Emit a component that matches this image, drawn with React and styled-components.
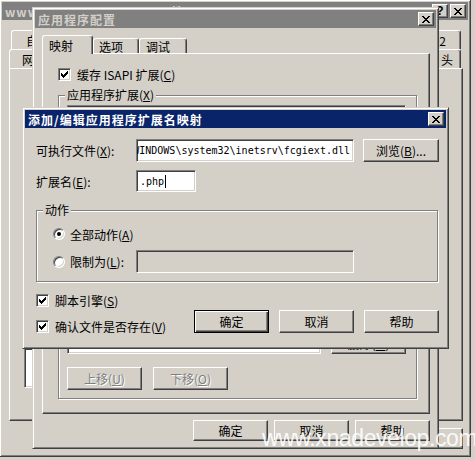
import styled, { createGlobalStyle, css } from "styled-components";

const GlobalStyle = createGlobalStyle`
  html, body { margin: 0; padding: 0; }
  body {
    background: #D4D0C8;
    font-family: "Noto Sans CJK SC", "Liberation Sans", sans-serif;
    font-size: 12px;
    color: #000;
    text-autospace: no-autospace;
  }
  * { box-sizing: border-box; }
`;

const raised = `
  border: 1px solid;
  border-color: #fff #404040 #404040 #fff;
  box-shadow: inset -1px -1px #808080;
`;

const sunken = `
  border: 1px solid;
  border-color: #808080 #fff #fff #808080;
  box-shadow: inset 1px 1px #404040, inset -1px -1px #D4D0C8;
`;

const Desktop = styled.div`
  position: relative;
  width: 475px;
  height: 460px;
  overflow: hidden;
  background: #D4D0C8;
`;

const Window = styled.div`
  position: absolute;
  isolation: isolate;
  left: ${p => p.$x}px;
  top: ${p => p.$y}px;
  width: ${p => p.$w}px;
  height: ${p => p.$h}px;
  display: flex;
  flex-direction: column;
  padding: 2px;
  background: #D4D0C8;
  border: 1px solid;
  border-color: #D4D0C8 #404040 #404040 #D4D0C8;
  box-shadow: inset 1px 1px #fff, inset -1px -1px #808080;
`;

const TitleBar = styled.div`
  flex: none;
  height: 18px;
  display: flex;
  align-items: center;
  padding: 0 2px 0 3px;
  background: ${p => (p.$active ? "#0A246A" : "#808080")};
  color: ${p => (p.$active ? "#fff" : "#D4D0C8")};
`;

const TitleText = styled.span`
  flex: 1;
  font-weight: bold;
  letter-spacing: 1px;
  white-space: nowrap;
  overflow: hidden;
`;

const CaptionButtons = styled.div`
  display: flex;
  gap: 2px;
`;

const CaptionButton = styled.div`
  width: 16px;
  height: 14px;
  display: flex;
  align-items: center;
  justify-content: center;
  background: #D4D0C8;
  ${raised}
  color: #000;
  font: bold 12px "Liberation Sans", sans-serif;
`;

const Body = styled.div`
  flex: 1;
  min-height: 0;
  display: flex;
  flex-direction: column;
  padding: ${p => p.$pad};
`;

const TabRow = styled.div`
  flex: none;
  display: flex;
  justify-content: space-between;
  align-items: flex-end;
  height: ${p => p.$h ?? 19}px;
  padding: 0 2px 0 ${p => p.$left ?? 0}px;
`;

const TabGroup = styled.div`
  display: flex;
  align-items: flex-end;
`;

const Tab = styled.div`
  height: ${p => (p.$active ? 19 : p.$h ?? 15)}px;
  margin-bottom: ${p => (p.$active ? -1 : 0)}px;
  width: ${p => (p.$w ? `${p.$w}px` : "auto")};
  position: relative;
  z-index: ${p => (p.$active ? 2 : 1)};
  display: flex;
  align-items: center;
  padding: 0 ${p => p.$pr ?? 6}px 0 ${p => p.$pl ?? 6}px;
  background: #D4D0C8;
  border-top: 1px solid #fff;
  border-left: 1px solid #fff;
  border-right: 1px solid #404040;
  box-shadow: inset -1px 0 #808080;
  border-radius: 3px 3px 0 0;
  white-space: nowrap;
`;

const TabPanel = styled.div`
  flex: 1;
  min-height: 0;
  display: flex;
  flex-direction: column;
  padding: ${p => p.$pad};
  ${raised}
`;

const Group = styled.div`
  position: relative;
  display: flex;
  flex-direction: column;
  padding: ${p => p.$pad};
  margin-top: ${p => p.$mt ?? 0}px;
  margin-right: ${p => p.$mr ?? 0}px;
  border: 1px solid #808080;
  box-shadow: inset 1px 1px #fff, 1px 1px #fff;
  ${p => p.$grow && "flex: 1; min-height: 0;"}
`;

const GroupLabel = styled.span`
  position: absolute;
  top: -9px;
  left: 6px;
  padding: 0 2px;
  background: #D4D0C8;
  line-height: 16px;
`;

const Row = styled.div`
  display: flex;
  align-items: center;
  gap: ${p => p.$gap ?? 0}px;
  margin-top: ${p => p.$mt ?? 0}px;
  height: ${p => (p.$h ? `${p.$h}px` : "auto")};
`;

const Label = styled.span`
  flex: none;
  width: ${p => (p.$w ? `${p.$w}px` : "auto")};
  white-space: nowrap;
`;

const Edit = styled.div`
  flex: none;
  width: ${p => p.$w}px;
  height: ${p => p.$h ?? 22}px;
  display: flex;
  align-items: center;
  justify-content: ${p => (p.$end ? "flex-end" : "flex-start")};
  padding: 0 3px;
  overflow: hidden;
  white-space: nowrap;
  background: ${p => (p.$disabled ? "#D4D0C8" : "#fff")};
  font-family: "DejaVu Sans Mono", "Liberation Mono", monospace;
  font-size: 10px;
  ${sunken}
`;

const Caret = styled.span`
  width: 1px;
  height: 13px;
  margin-left: 1px;
  background: #000;
`;

const ListView = styled.div`
  flex: ${p => (p.$fixed ? "none" : "1")};
  width: ${p => (p.$w ? `${p.$w}px` : "auto")};
  height: ${p => (p.$h ? `${p.$h}px` : "auto")};
  margin-top: ${p => (p.$push ? "auto" : "0")};
  background: #fff;
  ${sunken}
`;

const Button = styled.button`
  flex: none;
  width: ${p => p.$w ?? 75}px;
  height: ${p => p.$h ?? 22}px;
  padding: 0;
  display: flex;
  align-items: center;
  justify-content: center;
  font: inherit;
  white-space: nowrap;
  background: #D4D0C8;
  color: ${p => (p.$disabled ? "#808080" : "#000")};
  text-shadow: ${p => (p.$disabled ? "1px 1px #fff" : "none")};
  ${raised}
  ${p =>
    p.$default &&
    css`
      border: 1px solid #000;
      box-shadow: inset 1px 1px #fff, inset -1px -1px #404040, inset -2px -2px #808080;
    `}
`;

const ButtonRow = styled.div`
  flex: none;
  display: flex;
  justify-content: flex-end;
  gap: ${p => p.$gap ?? 6}px;
  margin-top: ${p => p.$mt ?? 0}px;
`;

const Check = styled.span`
  flex: none;
  width: 13px;
  height: 13px;
  display: flex;
  align-items: center;
  justify-content: center;
  background: #fff;
  ${sunken}
`;

const Radio = styled.span`
  flex: none;
  width: 12px;
  height: 12px;
  border-radius: 50%;
  display: flex;
  align-items: center;
  justify-content: center;
  background: #fff;
  border: 1px solid;
  border-color: #808080 #fff #fff #808080;
  box-shadow: inset 1px 1px #404040, inset -1px -1px #D4D0C8;
  &::after {
    content: "";
    width: 4px;
    height: 4px;
    border-radius: 50%;
    background: ${p => (p.$checked ? "#000" : "transparent")};
  }
`;

const OptionLine = styled.label`
  flex: none;
  display: flex;
  align-items: center;
  gap: ${p => p.$gap ?? 6}px;
  width: ${p => (p.$w ? `${p.$w}px` : "auto")};
  height: ${p => p.$h ?? 13}px;
  margin-top: ${p => p.$mt ?? 0}px;
  white-space: nowrap;
`;

const BottomArea = styled.div`
  flex: none;
  display: flex;
  justify-content: space-between;
  align-items: flex-end;
  margin-top: 12px;
`;

const Column = styled.div`
  display: flex;
  flex-direction: column;
`;

const Watermark = styled.div`
  position: absolute;
  left: 262px;
  top: 425px;
  font-family: "Liberation Sans", sans-serif;
  font-size: 23px;
  letter-spacing: -0.4px;
  color: rgba(255, 255, 255, 0.9);
  white-space: nowrap;
  pointer-events: none;
`;

const CloseGlyph = () => (
  <svg width="8" height="7" viewBox="0 0 8 7" shapeRendering="crispEdges">
    <path
      fill="#000"
      d="M0 0h2v1H0z M6 0h2v1H6z M1 1h2v1H1z M5 1h2v1H5z M2 2h4v1H2z M3 3h2v1H3z M2 4h4v1H2z M1 5h2v1H1z M5 5h2v1H5z M0 6h2v1H0z M6 6h2v1H6z"
    />
  </svg>
);

const CheckGlyph = () => (
  <svg width="7" height="7" viewBox="0 0 7 7" shapeRendering="crispEdges">
    <path
      fill="#000"
      d="M6 0h1v1H6z M5 1h2v1H5z M0 2h1v1H0z M4 2h3v1H4z M0 3h2v1H0z M3 3h3v1H3z M0 4h5v1H0z M1 5h3v1H1z M2 6h1v1H2z"
    />
  </svg>
);

const Acc = ({ k }) => (
  <>
    (<u>{k}</u>)
  </>
);

export default function App() {
  return (
    <>
      <GlobalStyle />
      <Desktop>
        {/* site properties, behind */}
        <Window $x={-1} $y={-1} $w={472} $h={458}>
          <TitleBar>
            <TitleText>www.xnadevelop.com 属性</TitleText>
            <CaptionButtons>
              <CaptionButton>?</CaptionButton>
              <CaptionButton>
                <CloseGlyph />
              </CaptionButton>
            </CaptionButtons>
          </TitleBar>
          <Body $pad="10px 5px 5px 7px">
            <TabRow $left={2}>
              <Tab $h={19} $pl={14}>自定义错误</Tab>
              <Tab $h={19} $pr={14}>服务器扩展 2002</Tab>
            </TabRow>
            <TabRow>
              <Tab $h={19} $pl={12}>网站</Tab>
              <Tab $h={19} $pr={7}>HTTP 头</Tab>
            </TabRow>
            <TabPanel $pad="10px 14px 32px 14px">
              <ListView $fixed $push $w={300} $h={40} />
            </TabPanel>
            <ButtonRow $mt={7}>
              <Button $h={21}>确定</Button>
              <Button $h={21}>取消</Button>
              <Button $h={21}>
                应用<Acc k="A" />
              </Button>
              <Button $h={21}>帮助</Button>
            </ButtonRow>
          </Body>
        </Window>

        {/* application configuration */}
        <Window $x={32} $y={7} $w={407} $h={442}>
          <TitleBar>
            <TitleText>应用程序配置</TitleText>
            <CaptionButton>
              <CloseGlyph />
            </CaptionButton>
          </TitleBar>
          <Body $pad="7px 6px 5px 7px">
            <TabRow $h={18}>
              <TabGroup>
                <Tab $active $w={51}>映射</Tab>
                <Tab $w={46} $pl={5}>选项</Tab>
                <Tab $w={48} $pl={6}>调试</Tab>
              </TabGroup>
            </TabRow>
            <TabPanel $pad="14px 12px 14px 15px">
              <OptionLine>
                <Check>
                  <CheckGlyph />
                </Check>
                <span>
                  缓存 ISAPI 扩展<Acc k="C" />
                </span>
              </OptionLine>
              <Group $grow $mt={14} $pad="9px 10px 8px 8px">
                <GroupLabel>
                  应用程序扩展<Acc k="X" />
                </GroupLabel>
                <ListView />
                <Row $gap={10} $mt={7}>
                  <Edit $w={254} />
                  <Button>
                    删除<Acc k="M" />
                  </Button>
                </Row>
                <Row $gap={11} $mt={13}>
                  <Button $disabled $h={23}>
                    上移<Acc k="U" />
                  </Button>
                  <Button $disabled $h={23}>
                    下移<Acc k="O" />
                  </Button>
                </Row>
              </Group>
            </TabPanel>
            <ButtonRow $mt={6}>
              <Button $h={21}>确定</Button>
              <Button $h={21}>取消</Button>
              <Button $h={21}>帮助</Button>
            </ButtonRow>
          </Body>
        </Window>

        {/* add / edit mapping, active */}
        <Window $x={22} $y={107} $w={427} $h={242}>
          <TitleBar $active>
            <TitleText>添加/编辑应用程序扩展名映射</TitleText>
            <CaptionButton>
              <CloseGlyph />
            </CaptionButton>
          </TitleBar>
          <Body $pad="11px 7px 12px 11px">
            <Row $h={23}>
              <Label $w={100}>
                可执行文件<Acc k="X" />:
              </Label>
              <Edit $w={218} $h={23} $end>
                C:\WINDOWS\system32\inetsrv\fcgiext.dll
              </Edit>
              <Button $w={76} $h={23} style={{ marginLeft: 9 }}>
                浏览<Acc k="B" />...
              </Button>
            </Row>
            <Row $h={22} $mt={8}>
              <Label $w={100}>
                扩展名<Acc k="E" />:
              </Label>
              <Edit $w={60}>
                .php
                <Caret />
              </Edit>
            </Row>
            <Group $mt={18} $mr={1} $pad="16px 10px 8px 16px">
              <GroupLabel>动作</GroupLabel>
              <OptionLine $gap={5} $h={14}>
                <Radio $checked />
                <span>
                  全部动作<Acc k="A" />
                </span>
              </OptionLine>
              <Row $h={23} $mt={9}>
                <OptionLine $gap={5} $h={14} $w={83}>
                  <Radio />
                  <span>
                    限制为<Acc k="L" />:
                  </span>
                </OptionLine>
                <Edit $w={218} $h={23} $disabled />
              </Row>
            </Group>
            <BottomArea>
              <Column>
                <OptionLine>
                  <Check>
                    <CheckGlyph />
                  </Check>
                  <span>
                    脚本引擎<Acc k="S" />
                  </span>
                </OptionLine>
                <OptionLine $mt={13}>
                  <Check>
                    <CheckGlyph />
                  </Check>
                  <span>
                    确认文件是否存在<Acc k="V" />
                  </span>
                </OptionLine>
              </Column>
              <ButtonRow $gap={10}>
                <Button $default $h={23}>确定</Button>
                <Button $h={23}>取消</Button>
                <Button $h={23}>帮助</Button>
              </ButtonRow>
            </BottomArea>
          </Body>
        </Window>

        <Watermark>www.xnadevelop.com</Watermark>
      </Desktop>
    </>
  );
}
